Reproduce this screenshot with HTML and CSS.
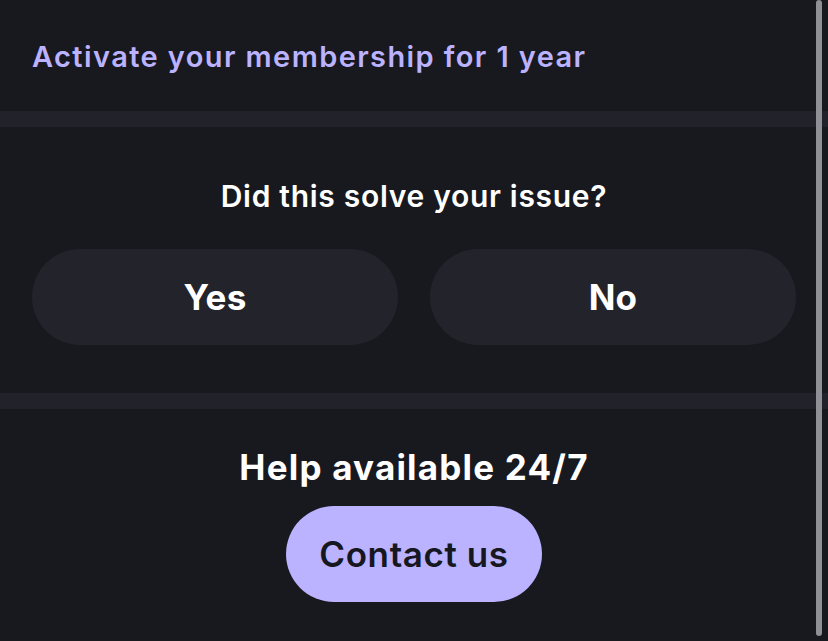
FILE: index.html
```html
<!DOCTYPE html>
<html lang="en">
<head>
<meta charset="utf-8">
<link rel="stylesheet" href="styles.css">
</head>
<body>
<div class="page">
  <section class="link-row">
    <a class="activate" href="#">Activate your membership for 1 year</a>
  </section>
  <div class="sep"></div>
  <section class="feedback">
    <h2 class="question">Did this solve your issue?</h2>
    <div class="choices">
      <button class="choice">Yes</button>
      <button class="choice">No</button>
    </div>
  </section>
  <div class="sep"></div>
  <section class="help">
    <h2 class="help-title">Help available 24/7</h2>
    <button class="contact">Contact us</button>
  </section>
</div>
<div class="scroll-thumb"></div>
</body>
</html>
```

FILE: styles.css
```css
* { box-sizing: border-box; }
html, body {
  margin: 0;
  padding: 0;
  background: #18181f;
  height: 100%;
  overflow: hidden;
}
body {
  font-family: "Inter", "Open Sans", sans-serif;
  color: #ffffff;
  position: relative;
}
.page {
  display: flex;
  flex-direction: column;
}
.link-row {
  height: 111px;
  padding: 37px 32px 0;
}
.activate {
  color: #bbb3ff;
  text-decoration: none;
  font-weight: 600;
  font-size: 29px;
  line-height: 40px;
  letter-spacing: 1.4px;
}
.sep {
  height: 16px;
  background: #22222b;
}
.feedback {
  height: 266px;
  padding: 49px 32px 0;
  display: flex;
  flex-direction: column;
  align-items: center;
}
.question {
  margin: 0;
  font-size: 30px;
  font-weight: 600;
  line-height: 40px;
  letter-spacing: 0.7px;
}
.choices {
  margin-top: 33px;
  display: flex;
  gap: 32px;
  width: 100%;
}
.choice {
  flex: 1;
  height: 96px;
  border: 0;
  border-radius: 48px;
  background: #23232b;
  color: #ffffff;
  font-family: inherit;
  font-weight: 700;
  font-size: 35px;
  letter-spacing: 0.3px;
}
.help {
  padding: 36px 32px 0;
  display: flex;
  flex-direction: column;
  align-items: center;
}
.help-title {
  margin: 0;
  font-size: 35px;
  font-weight: 700;
  line-height: 44px;
  letter-spacing: 1.2px;
}
.contact {
  margin-top: 17px;
  width: 256px;
  height: 96px;
  border: 0;
  border-radius: 48px;
  background: #bbb3ff;
  color: #17171f;
  font-family: inherit;
  font-weight: 600;
  font-size: 35px;
  letter-spacing: 0.6px;
}
.scroll-thumb {
  position: absolute;
  top: 0;
  left: 816px;
  width: 6px;
  height: 636px;
  border-radius: 3px;
  background: #8f8f96;
}
```
